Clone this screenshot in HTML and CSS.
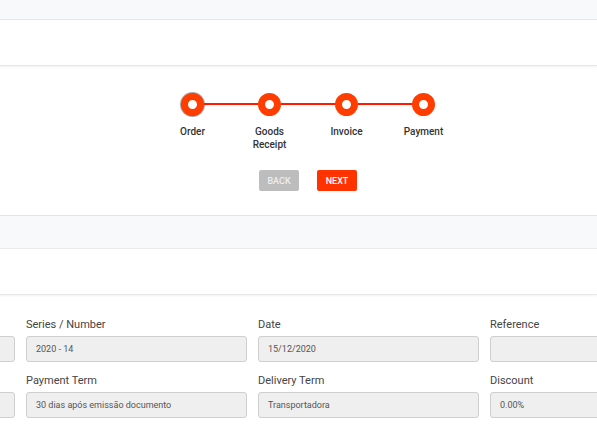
FILE: index.html
```html
<!DOCTYPE html>
<html>
<head>
<meta charset="utf-8">
<link rel="stylesheet" href="styles.css">
</head>
<body>
<div class="topbar"></div>
<div class="header"></div>
<section class="wizard">
  <div class="steps">
    <div class="step first"><span class="dot"></span><span class="label">Order</span></div>
    <div class="step"><span class="dot"></span><span class="label">Goods<br>Receipt</span></div>
    <div class="step"><span class="dot"></span><span class="label">Invoice</span></div>
    <div class="step last"><span class="dot"></span><span class="label">Payment</span></div>
  </div>
  <div class="actions">
    <button class="btn back">BACK</button>
    <button class="btn next">NEXT</button>
  </div>
</section>
<div class="band"></div>
<div class="header2"></div>
<section class="form">
  <div class="field"><label>&nbsp;</label><div class="input"></div></div>
  <div class="field"><label>Series / Number</label><div class="input">2020 - 14</div></div>
  <div class="field"><label>Date</label><div class="input">15/12/2020</div></div>
  <div class="field"><label>Reference</label><div class="input"></div></div>
  <div class="field"><label>&nbsp;</label><div class="input"></div></div>
  <div class="field"><label>Payment Term</label><div class="input">30 dias após emissão documento</div></div>
  <div class="field"><label>Delivery Term</label><div class="input">Transportadora</div></div>
  <div class="field"><label>Discount</label><div class="input">0.00%</div></div>
</section>
</body>
</html>
```
FILE: styles.css
```css
html, body {
  margin: 0;
  padding: 0;
  background: #fff;
  font-family: Roboto, "Liberation Sans", sans-serif;
  overflow: hidden;
  width: 597px;
  height: 446px;
}
.topbar {
  height: 19px;
  background: #f8f9fa;
  border-bottom: 1px solid #e8e8e8;
  box-shadow: 0 1px 2px rgba(0,0,0,0.05);
}
.header {
  height: 45px;
  background: #fff;
  border-bottom: 1px solid #e6e6e6;
  box-shadow: 0 1px 2px rgba(0,0,0,0.06);
}
.wizard {
  height: 149px;
  padding-left: 19px;
  box-sizing: border-box;
  padding-top: 27px;
  display: flex;
  flex-direction: column;
  align-items: center;
}
.steps {
  display: flex;
}
.step {
  position: relative;
  width: 77px;
  display: flex;
  flex-direction: column;
  align-items: center;
}
.step:not(.last)::after {
  content: "";
  position: absolute;
  left: calc(50% + 11px);
  top: 10px;
  width: 55px;
  height: 2px;
  background: #ff1a00;
}
.dot {
  width: 9px;
  height: 9px;
  border: 7px solid #ff3d00;
  border-radius: 50%;
  background: #fff;
}
.first .dot {
  box-shadow: 0 0 0 1px rgba(90,70,70,0.5);
}
.label {
  margin-top: 9px;
  font-size: 10px;
  font-weight: 500;
  color: #333;
  text-align: center;
  line-height: 13px;
}
.actions {
  display: flex;
  gap: 18px;
  margin-top: 19px;
}
.btn {
  width: 40px;
  height: 21px;
  border: none;
  border-radius: 2px;
  font-family: Roboto, "Liberation Sans", sans-serif;
  font-size: 9px;
  font-weight: 500;
  padding: 0;
  color: #fff;
}
.back {
  background: #bdbdbd;
  color: #eeeeee;
}
.next {
  background: #ff3300;
}
.band {
  height: 32px;
  background: #f8f9fa;
  border-top: 1px solid #e4e4e4;
  border-bottom: 1px solid #ebebeb;
}
.header2 {
  height: 45px;
  border-bottom: 1px solid #e8e8e8;
  box-shadow: 0 1px 2px rgba(0,0,0,0.05);
}
.form {
  display: grid;
  grid-template-columns: repeat(4, 221px);
  column-gap: 11px;
  row-gap: 12px;
  margin-left: -206px;
  padding-top: 23px;
}
.field label {
  display: block;
  font-size: 11px;
  color: #444;
  line-height: 13px;
  margin-bottom: 5px;
}
.input {
  height: 26px;
  box-sizing: border-box;
  background: #efefef;
  border: 1px solid #cfcfcf;
  border-radius: 3px;
  font-size: 9px;
  color: #555;
  padding-left: 9px;
  line-height: 24px;
}
```
